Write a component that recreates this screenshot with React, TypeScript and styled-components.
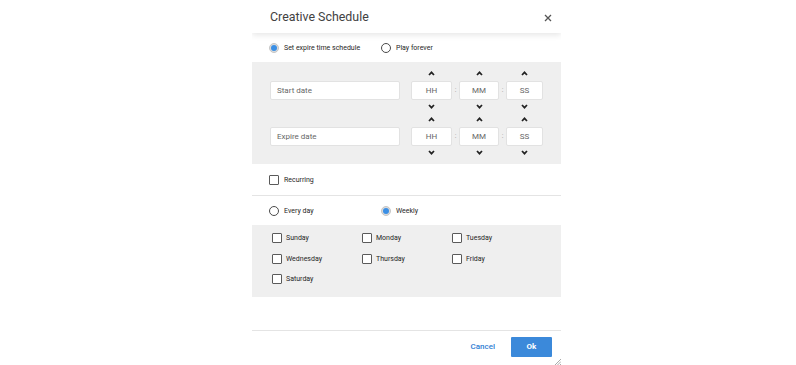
import React from "react";
import styled, { createGlobalStyle } from "styled-components";

const Global = createGlobalStyle`
  html, body { margin: 0; padding: 0; background: #ffffff; }
  body { font-family: Roboto, "Liberation Sans", Arial, sans-serif; }
  * { box-sizing: border-box; }
`;

const Dialog = styled.div`
  margin-left: 252px;
  width: 309px;
  height: 365px;
  background: #fff;
  display: flex;
  flex-direction: column;
  position: relative;
  overflow: hidden;
`;

const Header = styled.div`
  height: 33px;
  flex: none;
  display: flex;
  align-items: center;
  justify-content: space-between;
  padding: 0 6px 0 18px;
  position: relative;
  z-index: 2;
  background: #fff;
  box-shadow: 0 2px 6px rgba(0, 0, 0, 0.1);
`;

const Title = styled.h1`
  margin: 0;
  font-size: 12.4px;
  font-weight: 400;
  color: #424242;
`;

const CloseButton = styled.button`
  border: 0;
  background: transparent;
  padding: 0;
  width: 14px;
  height: 14px;
  display: flex;
  align-items: center;
  justify-content: center;
  margin-top: 2px;
`;

const OptionRow = styled.div<{ $height: number }>`
  height: ${(p) => p.$height}px;
  flex: none;
  display: flex;
  align-items: center;
  padding: 1px 0 0 17px;
`;

const Option = styled.label<{ $width?: number; $gap?: number }>`
  display: flex;
  align-items: center;
  gap: ${(p) => p.$gap ?? 5}px;
  width: ${(p) => (p.$width ? `${p.$width}px` : "auto")};
  font-size: 7px;
  color: #262626;
`;

const RadioMark = styled.span<{ $checked?: boolean }>`
  width: 10px;
  height: 10px;
  border-radius: 50%;
  flex: none;
  position: relative;
  border: 1px solid ${(p) => (p.$checked ? "#c6c6c6" : "#4a4a4a")};
  background: ${(p) => (p.$checked ? "#dcdcdc" : "#fff")};
  &::after {
    content: "";
    display: ${(p) => (p.$checked ? "block" : "none")};
    position: absolute;
    left: 1px;
    top: 1px;
    width: 6px;
    height: 6px;
    border-radius: 50%;
    background: #3b8fe5;
  }
`;

const CheckMark = styled.span`
  width: 10px;
  height: 10px;
  flex: none;
  border: 1px solid #5a5a5a;
  border-radius: 1px;
  background: #fff;
`;

const GraySection = styled.div`
  background: #efefef;
  flex: none;
`;

const TimeSection = styled(GraySection)`
  padding: 5px 0 5px 18px;
`;

const TimeRow = styled.div`
  display: flex;
  align-items: center;
  height: 46px;
`;

const DateInput = styled.div`
  width: 130px;
  height: 19px;
  background: #fff;
  border: 1px solid #e2e2e2;
  border-radius: 2px;
  display: flex;
  align-items: center;
  padding-left: 6px;
  font-size: 8px;
  color: #666;
  margin-right: 11px;
`;

const TimeColumn = styled.div<{ $width: number }>`
  width: ${(p) => p.$width}px;
  display: flex;
  flex-direction: column;
  align-items: center;
`;

const ChevronSlot = styled.div<{ $h: number }>`
  height: ${(p) => p.$h}px;
  display: flex;
  align-items: center;
  justify-content: center;
`;

const TimeBox = styled.div`
  width: 100%;
  height: 19px;
  margin-top: 2px;
  background: #fff;
  border: 1px solid #e2e2e2;
  border-radius: 2px;
  display: flex;
  align-items: center;
  justify-content: center;
  font-size: 8px;
  color: #666;
`;

const Separator = styled.span`
  width: 7px;
  text-align: center;
  font-size: 7px;
  color: #9a9a9a;
`;

const Divider = styled.div`
  height: 1px;
  flex: none;
  background: #e4e4e4;
`;

const DaysGrid = styled(GraySection)`
  display: grid;
  grid-template-columns: 90px 90px 90px;
  grid-auto-rows: 20.5px;
  padding: 3px 0 7px 20px;
`;

const Spacer = styled.div`
  height: 33px;
  flex: none;
`;

const Footer = styled.div`
  display: flex;
  justify-content: flex-end;
  align-items: center;
  gap: 16px;
  padding: 6px 9px 0 0;
`;

const TextButton = styled.button`
  border: 0;
  background: transparent;
  padding: 0;
  font-family: inherit;
  font-size: 8px;
  font-weight: 500;
  color: #2f7ed3;
`;

const PrimaryButton = styled.button`
  border: 0;
  width: 41px;
  height: 20px;
  background: #3b89da;
  color: #fff;
  font-family: inherit;
  font-size: 8px;
  font-weight: 700;
  border-radius: 1px;
`;

const ResizeHandle = styled.svg`
  position: absolute;
  right: 0;
  bottom: 0;
`;

const Chevron = ({ up }: { up?: boolean }) => (
  <svg width="7" height="5" viewBox="0 0 7 5">
    <polyline
      points={up ? "1,4 3.5,1.3 6,4" : "1,1 3.5,3.7 6,1"}
      fill="none"
      stroke="#222"
      strokeWidth="1.7"
    />
  </svg>
);

const TimeField = ({ label, width }: { label: string; width: number }) => (
  <TimeColumn $width={width}>
    <ChevronSlot $h={12}>
      <Chevron up />
    </ChevronSlot>
    <TimeBox>{label}</TimeBox>
    <ChevronSlot $h={13}>
      <Chevron />
    </ChevronSlot>
  </TimeColumn>
);

const DateTimeRow = ({ placeholder }: { placeholder: string }) => (
  <TimeRow>
    <DateInput>{placeholder}</DateInput>
    <TimeField label="HH" width={41} />
    <Separator>:</Separator>
    <TimeField label="MM" width={40} />
    <Separator>:</Separator>
    <TimeField label="SS" width={37} />
  </TimeRow>
);

const days = ["Sunday", "Monday", "Tuesday", "Wednesday", "Thursday", "Friday", "Saturday"];

export default function App() {
  return (
    <>
      <Global />
      <Dialog>
        <Header>
          <Title>Creative Schedule</Title>
          <CloseButton aria-label="close">
            <svg width="8" height="8" viewBox="0 0 8 8">
              <path d="M1 1 L7 7 M7 1 L1 7" stroke="#555" strokeWidth="1.3" />
            </svg>
          </CloseButton>
        </Header>
        <OptionRow $height={29}>
          <Option $width={112}>
            <RadioMark $checked />
            Set expire time schedule
          </Option>
          <Option>
            <RadioMark />
            Play forever
          </Option>
        </OptionRow>
        <TimeSection>
          <DateTimeRow placeholder="Start date" />
          <DateTimeRow placeholder="Expire date" />
        </TimeSection>
        <OptionRow $height={31}>
          <Option>
            <CheckMark />
            Recurring
          </Option>
        </OptionRow>
        <Divider />
        <OptionRow $height={29}>
          <Option $width={112}>
            <RadioMark />
            Every day
          </Option>
          <Option>
            <RadioMark $checked />
            Weekly
          </Option>
        </OptionRow>
        <DaysGrid>
          {days.map((d) => (
            <Option key={d} $gap={4}>
              <CheckMark />
              {d}
            </Option>
          ))}
        </DaysGrid>
        <Spacer />
        <Divider />
        <Footer>
          <TextButton>Cancel</TextButton>
          <PrimaryButton>Ok</PrimaryButton>
        </Footer>
        <ResizeHandle width="7" height="7" viewBox="0 0 7 7">
          <path d="M7 1 L1 7 M7 3.5 L3.5 7 M7 6 L6 7" stroke="#aaa" strokeWidth="1" />
        </ResizeHandle>
      </Dialog>
    </>
  );
}
